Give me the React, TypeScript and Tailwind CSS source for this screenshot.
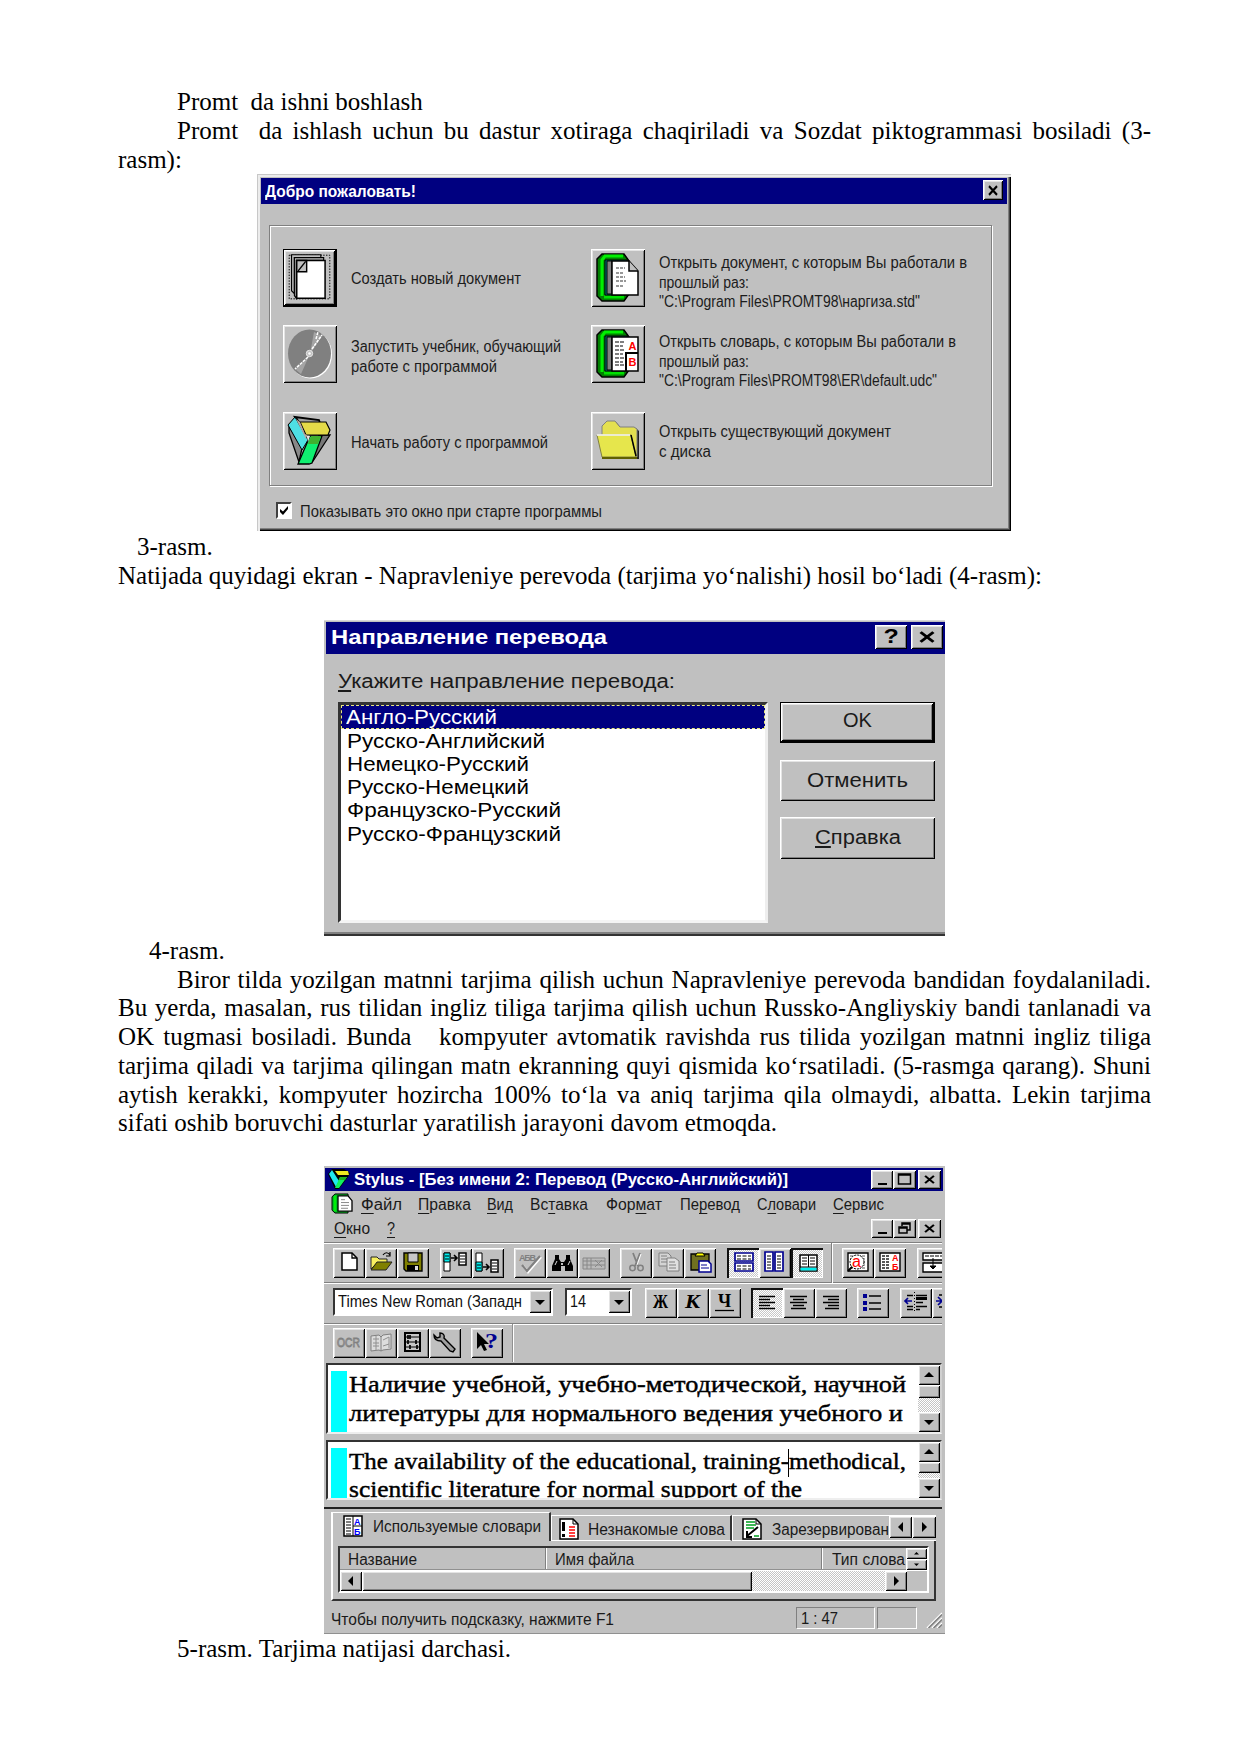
import React, { useLayoutEffect, useRef, useState } from "react";

type BoxProps = { className?: string; children?: React.ReactNode };

const RAISED =
  "bg-[#c0c0c0] shadow-[inset_1px_1px_0_#fff,inset_-1px_-1px_0_#000,inset_2px_2px_0_#e4e4e4,inset_-2px_-2px_0_#808080]";
const PRESSED =
  "bg-[repeating-conic-gradient(#fff_0_25%,#c8c8c8_0_50%)] bg-[length:2px_2px] shadow-[inset_2px_2px_0_#111,inset_-1px_-1px_0_#fff]";
const TRACK = "bg-[repeating-conic-gradient(#fff_0_25%,#c4c4c4_0_50%)] bg-[length:2px_2px]";

/** One line of text stretched or condensed to the width of its box. */
function Fit({ className = "", children }: BoxProps) {
  const box = useRef<HTMLSpanElement>(null);
  const line = useRef<HTMLSpanElement>(null);
  const [scale, setScale] = useState(1);
  useLayoutEffect(() => {
    if (box.current && line.current && line.current.offsetWidth) {
      setScale(box.current.clientWidth / line.current.getBoundingClientRect().width);
    }
  }, []);
  return (
    <span ref={box} className={`block shrink-0 whitespace-pre ${className}`}>
      <span ref={line} className="inline-block origin-left" style={{ transform: `scaleX(${scale})` }}>
        {children}
      </span>
    </span>
  );
}

function Ico({ className = "", children, box = "0 0 32 30" }: BoxProps & { box?: string }) {
  return (
    <svg viewBox={box} className={`block ${className}`} fill="none" preserveAspectRatio="none">
      {children}
    </svg>
  );
}

function Line({ className = "", children }: BoxProps) {
  return <p className={`h-[28.75px] whitespace-pre leading-[28.75px] ${className}`}>{children}</p>;
}

function Just({ className = "", children }: BoxProps) {
  return (
    <p className={`h-[28.75px] w-[1033px] leading-[28.75px] whitespace-nowrap [text-align-last:justify] ${className}`}>
      {children}
    </p>
  );
}

/* ---------- Welcome dialog ---------- */

const BIG = "0 0 54 58";

function IconNewBig() {
  return (
    <Ico box={BIG} className="h-full w-full">
      <rect x="5.5" y="5.5" width="43" height="46" stroke="#000" strokeDasharray="1.5 1.5" />
      <path d="M8 5h31v3H11v38l-3-3z" fill="#c0c0c0" stroke="#000" strokeWidth="1.200" />
      <path d="M11 8h31v3H13v40l-2-3z" fill="#c0c0c0" stroke="#000" strokeWidth="1.200" />
      <path d="M13.500 11h30v40h-30z" fill="#fff" stroke="#000" strokeWidth="1.600" />
      <path d="M13.500 11h10.500v12H13.500z" fill="#c0c0c0" stroke="#000" strokeWidth="1.500" />
      <path d="M15 22l8-10" stroke="#000" strokeWidth="1.500" />
    </Ico>
  );
}

function IconDisc() {
  return (
    <Ico box={BIG} className="h-full w-full">
      <ellipse cx="27.500" cy="29.500" rx="21.500" ry="24" fill="#fff" />
      <ellipse cx="26.500" cy="28.500" rx="21.500" ry="24" fill="#808080" />
      <path d="M27 29L31 7l8 4zM26 31L12 44l6 5z" fill="#a4a4a4" />
      <path d="M29 24L39 10M33 14l2-7M25 32L12 44" stroke="#fff" strokeWidth="1.500" strokeDasharray="3 1" />
      <circle cx="26.500" cy="28.500" r="3.200" fill="#c0c0c0" stroke="#e8e8e8" />
      <circle cx="26.500" cy="28.500" r="1.300" fill="#fff" />
    </Ico>
  );
}

function IconPrismBig() {
  return (
    <Ico box={BIG} className="h-full w-full">
      <path d="M6 14v7l10 29 3-14z" fill="#888" stroke="#000" strokeWidth="1.300" />
      <path d="M47 23L30 49l-2 1 8-27z" fill="#777" stroke="#000" strokeWidth="1.300" />
      <path d="M12 5l24 3 1 3H17z" fill="#a0a0a0" stroke="#000" strokeWidth="1.800" />
      <path d="M5 13l7-8 13 23-6 10z" fill="#4edfe4" stroke="#000" strokeWidth="1" />
      <path d="M17 10h26l4 8-2 5H23z" fill="#e4da48" stroke="#000" strokeWidth="1.200" />
      <path d="M17 10l5 12 2 1-1 4L13 7z" fill="#b8a8a0" />
      <path d="M27 24h12L29 51l-3 1H15z" fill="#10ee70" stroke="#000" strokeWidth="1.300" />
      <path d="M28 24h10l-3 8H25z" fill="#40b030" />
      <path d="M24 24h3l-2 6z" fill="#e8e8e8" />
    </Ico>
  );
}

function PrismSmall() {
  return (
    <Ico box="0 0 22 20" className="mt-px ml-[3px] h-[20px] w-[22px]">
      <path d="M0 5l4-5h12l6 4-2 4-9 12H7z" fill="#000" />
      <path d="M1 5l3-4 7 11-3 6z" fill="#20e8f0" />
      <path d="M7 2h13l1 4H10z" fill="#f0e820" />
      <path d="M12 8h7l-8 11H7z" fill="#10f060" />
      <path d="M12 8h7l-2 3h-6z" fill="#20b020" />
    </Ico>
  );
}

function Binder({ children }: BoxProps) {
  return (
    <Ico box={BIG} className="h-full w-full">
      <path d="M6 10l5-5h22l5 7v33l-5 7H11l-5-5z" fill="#008000" stroke="#000" strokeWidth="1.500" />
      <path d="M11 47V11l3-4h18" stroke="#00f000" strokeWidth="3" />
      <path d="M13 48h20" stroke="#00e000" strokeWidth="3" />
      <path d="M14 11h22v35H14z" fill="#008080" stroke="#000" />
      <path d="M16 12h5v33h-5z" fill="#808080" stroke="#000" />
      {children}
    </Ico>
  );
}

function IconDocBig() {
  return (
    <Binder>
      <path d="M21 12h17l9 10v24H21z" fill="#fff" stroke="#000" strokeWidth="1.500" />
      <path d="M38 12v10h9" fill="#c0c0c0" stroke="#000" strokeWidth="1.500" />
      <path d="M25 19h9M25 24h8M25 28h9M25 32h10M25 37h8" stroke="#777" strokeWidth="1.300" strokeDasharray="3 1" />
    </Binder>
  );
}

function IconDictBig() {
  return (
    <Binder>
      <path d="M21 12h26v34H21z" fill="#fff" stroke="#000" strokeWidth="1.500" />
      <path d="M24 17h9M24 21h8M24 25h9M24 29h8M24 33h9M24 37h8M24 40h9" stroke="#555" strokeWidth="1.500" strokeDasharray="4 1" />
      <path d="M35 46V28h12" stroke="#000" strokeWidth="2" />
      <text x="37.500" y="25" fontSize="11" fontWeight="bold" fontFamily="Liberation Sans" fill="#f00">A</text>
      <text x="37.500" y="41" fontSize="11" fontWeight="bold" fontFamily="Liberation Sans" fill="#f00">B</text>
    </Binder>
  );
}

function IconFolderBig() {
  return (
    <Ico box={BIG} className="h-full w-full">
      <path d="M12 20l1-7 4-3h8l5 6h15l3 3v28H14z" fill="#222" />
      <path d="M11 22v-8l5-5h8l5 6h14l3 2v28H13z" fill="#e4e050" stroke="#808080" />
      <path d="M6 23h34l5 22H11z" fill="#e6e64c" stroke="#808040" />
      <path d="M6 23h33" stroke="#fff" strokeWidth="1.500" />
      <path d="M40 23l5 21" stroke="#000" strokeWidth="1.500" />
      <path d="M11 46h35" stroke="#606000" strokeWidth="2" />
    </Ico>
  );
}

function BigButton({ focus, children }: { focus?: boolean; children: React.ReactNode }) {
  return (
    <div className={`h-[58px] w-[54px] shrink-0 ${RAISED} ${focus ? "border-[1.5px] border-black border-r-2 border-b-2" : ""}`}>{children}</div>
  );
}

function CloseX({ className = "" }: { className?: string }) {
  return (
    <Ico box="0 0 10 10" className={className}>
      <path d="M1 1l8 8M9 1l-8 8" stroke="#000" strokeWidth="2" />
    </Ico>
  );
}

function Welcome() {
  return (
    <section className="ml-[257px] h-[357px] w-[754px] bg-[#c0c0c0] px-1 pt-1 font-['Liberation_Sans',sans-serif] text-[16px] leading-[19.3px] text-[#1c1c1c] shadow-[inset_1px_1px_0_#c8c8c8,inset_3px_3px_0_#ececec,inset_-1px_-1px_0_#000,inset_-2px_-2px_0_#444,inset_-3px_-3px_0_#808080]">
      <header className="flex h-[26px] items-start bg-[#000080] pl-1 text-white">
        <Fit className="mt-[4px] w-[151px] font-bold">Добро пожаловать!</Fit>
        <div className={`mt-[2px] mr-1 ml-auto flex h-5 w-5 items-center justify-center ${RAISED}`}>
          <CloseX className="h-[11px] w-[10px]" />
        </div>
      </header>
      <div className="mt-[21px] ml-2 h-[261px] w-[723px] border border-[#808080] pt-[23px] pl-[13px] shadow-[inset_1px_1px_0_#fff,1px_1px_0_#fff]">
        <div className="flex">
          <BigButton focus><IconNewBig /></BigButton>
          <div className="ml-[14px] w-[240px] pt-5"><Fit className="w-[170px]">Создать новый документ</Fit></div>
          <BigButton><IconDocBig /></BigButton>
          <div className="ml-[14px] h-[58px] pt-1">
            <Fit className="w-[308px]">Открыть документ, с которым Вы работали в</Fit>
            <Fit className="w-[90px]">прошлый раз:</Fit>
            <Fit className="w-[261px]">"C:\Program Files\PROMT98\наргиза.std"</Fit>
          </div>
        </div>
        <div className="mt-[18px] flex">
          <BigButton><IconDisc /></BigButton>
          <div className="ml-[14px] w-[240px] pt-3">
            <Fit className="w-[210px]">Запустить учебник, обучающий</Fit>
            <Fit className="w-[146px]">работе с программой</Fit>
          </div>
          <BigButton><IconDictBig /></BigButton>
          <div className="ml-[14px] h-[58px] pt-[7px]">
            <Fit className="w-[297px]">Открыть словарь, с которым Вы работали в</Fit>
            <Fit className="w-[90px]">прошлый раз:</Fit>
            <Fit className="w-[278px]">"C:\Program Files\PROMT98\ER\default.udc"</Fit>
          </div>
        </div>
        <div className="mt-[29px] flex">
          <BigButton><IconPrismBig /></BigButton>
          <div className="ml-[14px] w-[240px] pt-[21px]"><Fit className="w-[197px]">Начать работу с программой</Fit></div>
          <BigButton><IconFolderBig /></BigButton>
          <div className="ml-[14px] pt-[10px]">
            <Fit className="w-[232px]">Открыть существующий документ</Fit>
            <Fit className="w-[52px]">с диска</Fit>
          </div>
        </div>
      </div>
      <div className="mt-[16px] ml-[15px] flex">
        <div className="h-[17px] w-4 border-2 border-t-[#404040] border-r-white border-b-white border-l-[#404040] bg-white">
          <Ico box="0 0 12 13" className="h-[13px] w-3"><path d="M2 5v3l3 3 5-6V2L5 7.500z" fill="#000" /></Ico>
        </div>
        <Fit className="ml-[8px] w-[302px]">Показывать это окно при старте программы</Fit>
      </div>
    </section>
  );
}

/* ---------- Translation direction dialog ---------- */

function PushButton({ className = "", children }: BoxProps) {
  return <div className={`flex w-[155px] justify-center ${RAISED} ${className}`}>{children}</div>;
}

function Direction() {
  return (
    <section className="ml-[324px] h-[316px] w-[621px] border-t border-b-2 border-t-[#d8d8d8] border-b-[#333] bg-[#c0c0c0] pt-px font-['Liberation_Sans',sans-serif] text-[20px] leading-[23px] text-[#1a1a1a] shadow-[inset_0_-2px_0_#808080]">
      <header className="ml-[2px] flex h-[32px] bg-[#000080] pt-[3px] pl-[5px] text-white">
        <Fit className="mt-px w-[276px] font-bold">Направление перевода</Fit>
        <div className={`ml-auto flex h-6 w-8 items-center justify-center ${RAISED}`}>
          <span className="scale-x-125 text-[20px] font-bold text-black">?</span>
        </div>
        <div className={`mr-[2px] ml-1 flex h-6 w-8 items-center justify-center ${RAISED}`}>
          <CloseX className="h-3 w-4" />
        </div>
      </header>
      <Fit className="mt-[16px] ml-[14px] w-[337px]"><u className="underline-offset-2">У</u>кажите направление перевода:</Fit>
      <div className="mt-[9px] ml-[14px] flex">
        <div className="h-[221px] w-[430px] border-t-[3px] border-r-[3px] border-b-[3px] border-l-[3px] border-t-[#333] border-r-[#eee] border-b-[#f4f4f4] border-l-[#333] bg-white text-black">
          <div className="h-[24px] border border-dashed border-[#e8e880] bg-[#000080] pl-1 text-white">
            <Fit className="w-[151px]">Англо-Русский</Fit>
          </div>
          <div className="pt-px pl-[6px] leading-[23.200px]">
            <Fit className="w-[198px]">Русско-Английский</Fit>
            <Fit className="w-[182px]">Немецко-Русский</Fit>
            <Fit className="w-[182px]">Русско-Немецкий</Fit>
            <Fit className="w-[214px]">Французско-Русский</Fit>
            <Fit className="w-[214px]">Русско-Французский</Fit>
          </div>
        </div>
        <div className="ml-3">
          <PushButton className="h-[41px] border-t border-r-2 border-b-2 border-l border-black pt-[6px]"><Fit className="w-[29px]">OK</Fit></PushButton>
          <PushButton className="mt-[17px] h-[41px] pt-[9px]"><Fit className="w-[101px]">Отменить</Fit></PushButton>
          <PushButton className="mt-4 h-[42px] pt-[9px]"><Fit className="w-[86px]"><u className="underline-offset-2">С</u>правка</Fit></PushButton>
        </div>
      </div>
    </section>
  );
}

/* ---------- Stylus window ---------- */

function Tool({ on, className = "", children }: BoxProps & { on?: boolean }) {
  return (
    <div className={`h-[30px] w-[32px] shrink-0 overflow-hidden ${on ? PRESSED : RAISED} ${className}`}>
      <Ico className="h-[30px] w-[32px]">{children}</Ico>
    </div>
  );
}

function WinButtons({ restore }: { restore?: boolean }) {
  return (
    <>
      <div className={`flex h-[19px] w-[22px] items-end justify-center pb-1 ${RAISED}`}><span className="h-[2px] w-[9px] bg-black" /></div>
      <div className={`h-[19px] w-[23px] ${RAISED}`}>
        <Ico box="0 0 23 19" className="h-full w-full">
          {restore ? (
            <>
              <path d="M9 7V4h8v7h-3M9 5h8" stroke="#000" strokeWidth="1.500" />
              <path d="M6 8h8v6H6zM6 9h8" stroke="#000" strokeWidth="1.500" />
            </>
          ) : (
            <path d="M5.500 4h12v10h-12zM5 5h13" stroke="#000" strokeWidth="1.500" />
          )}
        </Ico>
      </div>
      <div className={`mr-[2px] ml-[2px] flex h-[19px] w-[23px] items-center justify-center ${RAISED}`}><CloseX className="h-[9px] w-[11px]" /></div>
    </>
  );
}

function Arrow({ dir, small, className = "" }: { dir: "up" | "down" | "left" | "right"; small?: boolean; className?: string }) {
  const d = { up: "M0 7h10L5 2z", down: "M0 3h10L5 8z", left: "M7 0v10L2 5z", right: "M3 0v10l5-5z" }[dir];
  return (
    <div className={`flex items-center justify-center ${RAISED} ${className}`}>
      <Ico box="0 0 10 10" className={small ? "h-[5px] w-[5px]" : "h-[10px] w-[10px]"}><path d={d} fill="#000" /></Ico>
    </div>
  );
}

function Menu({ className, a = "", u, b = "" }: { className: string; a?: string; u: string; b?: string }) {
  return <Fit className={className}>{a}<u className="underline-offset-[3px]">{u}</u>{b}</Fit>;
}

const BAR = "flex border-t border-[#808080] shadow-[inset_0_1px_0_#fff] pl-[9px]";

function Toolbars() {
  return (
    <div className="w-[618px] overflow-hidden">
      <div className={`${BAR} h-[40px] pt-[5px]`}>
        <Tool><path d="M9 5h10l5 5v12H9z" fill="#fff" stroke="#000" strokeWidth="1.500" /><path d="M19 5v5h5" stroke="#000" strokeWidth="1.300" /></Tool>
        <Tool>
          <path d="M6 21V9h6l2 2h8v4H12z" fill="#f8f060" stroke="#222" />
          <path d="M6 22l6-8h15l-6 8z" fill="#808000" stroke="#222" />
          <path d="M18 7c2-3 5-3 7 0m0-3v4h-4" stroke="#000" strokeWidth="1.200" />
        </Tool>
        <Tool>
          <path d="M7 5h18v18H9l-2-2z" fill="#808000" stroke="#000" strokeWidth="1.400" />
          <path d="M11 5h10v9H11z" fill="#c8c8c8" stroke="#000" /><path d="M10 17h12v6H10z" fill="#000" /><path d="M18 18h3v4h-3z" fill="#ddd" />
        </Tool>
        <Tool className="ml-[11px]">
          <path d="M4 5h6v18H4z" fill="#fff" stroke="#000" /><path d="M4 5h6v9H4z" fill="#0ee" stroke="#000" /><path d="M5 8h4M5 11h4" stroke="#000" />
          <path d="M11 10h6M14 7l3 3-3 3" stroke="#000" strokeWidth="1.600" /><path d="M19 5h7v12h-7z" fill="#fff" stroke="#000" strokeWidth="1.500" /><path d="M20 8h5M20 11h5M20 14h5" stroke="#000" />
        </Tool>
        <Tool>
          <path d="M4 5h6v18H4z" fill="#fff" stroke="#000" /><path d="M4 14h6v9H4z" fill="#0ee" stroke="#000" /><path d="M5 17h4M5 20h4" stroke="#000" />
          <path d="M11 19h6M14 16l3 3-3 3" stroke="#000" strokeWidth="1.600" /><path d="M19 12h7v12h-7z" fill="#fff" stroke="#000" strokeWidth="1.500" /><path d="M20 15h5M20 18h5M20 21h5" stroke="#000" />
        </Tool>
        <Tool className="ml-[10px]">
          <text x="5" y="13" fontSize="9" fontWeight="bold" fontFamily="Liberation Sans" fill="#808080" textLength="17">АБВ</text>
          <path d="M9 18l5 6L27 9" stroke="#fff" strokeWidth="2.500" /><path d="M8 17l5 6L26 8" stroke="#808080" strokeWidth="2.200" />
        </Tool>
        <Tool>
          <path d="M9 7h4v4l2 3h3l2-3V7h4v4l3 7v5h-8v-5h-4v5H6v-5l3-7z" fill="#000" /><path d="M9 17l2-4M22 17l2-4" stroke="#ddd" /><path d="M15 15h2v2h-2z" fill="#c0c0c0" />
        </Tool>
        <Tool><path d="M5 10h22v11H5z" stroke="#888" fill="#bbb" /><path d="M5 13h22M5 17h22M9 10v11M13 10v11M17 12l7 7M24 12l-7 7" stroke="#888" /></Tool>
        <Tool className="ml-[10px]">
          <path d="M13 5l5 13M20 5l-5 13" stroke="#808080" strokeWidth="1.800" /><circle cx="12.500" cy="20" r="2.700" stroke="#808080" strokeWidth="1.500" /><circle cx="20.500" cy="20" r="2.700" stroke="#808080" strokeWidth="1.500" /><path d="M21 6l-4 11" stroke="#fff" />
        </Tool>
        <Tool>
          <path d="M7 5h9l3 3v10H7z" fill="#d4d4d4" stroke="#808080" /><path d="M9 8h6M9 11h7M9 14h7" stroke="#808080" />
          <path d="M15 10h8l4 3v10H15z" fill="#e0e0e0" stroke="#808080" /><path d="M17 14h6M17 17h7M17 20h7" stroke="#808080" />
        </Tool>
        <Tool>
          <path d="M7 6h18v16H7z" fill="#707020" stroke="#000" strokeWidth="1.300" /><path d="M11 8l2-3h6l2 3z" fill="#ff0" stroke="#000" />
          <path d="M15 13h9l3 3v8H15z" fill="#fff" stroke="#000090" strokeWidth="1.500" /><path d="M17 17h6M17 20h8" stroke="#000090" />
        </Tool>
        <Tool on className="ml-[11px]">
          <path d="M8 5h18v8H8zM8 15h18v8H8z" fill="#fff" stroke="#000090" strokeWidth="1.700" /><path d="M10 8h14M10 11h14M10 18h14M10 21h14" stroke="#000" strokeDasharray="4 1.500" />
        </Tool>
        <Tool>
          <path d="M6 4h8v19H6zM16 4h8v19h-8z" fill="#fff" stroke="#000090" strokeWidth="1.700" /><path d="M8 8h4M8 11h4M8 14h4M8 17h4M8 20h4M18 8h4M18 11h4M18 14h4M18 17h4M18 20h4" stroke="#000" />
        </Tool>
        <Tool on>
          <path d="M9 7h17v16H9z" fill="#fff" stroke="#000" strokeWidth="1.500" /><path d="M9.500 19.500h16v3h-16z" fill="#0ee" /><path d="M17.500 7v12M9 19h17" stroke="#000" /><path d="M11 10h5M11 13h5M11 16h5M19 10h5M19 13h5M19 16h5" stroke="#000" />
        </Tool>
        <span className="-mt-[5px] ml-[8px] h-[40px] w-[2px] shrink-0 border-r border-l border-[#808080] border-r-white" />
        <Tool className="ml-[9px]">
          <path d="M6 5h20v18H6z" fill="#fff" stroke="#000" strokeWidth="1.400" /><path d="M8 8h16M8 11h16M8 14h16M8 17h16M8 20h16" stroke="#555" strokeDasharray="3 1" />
          <circle cx="15" cy="14" r="7" fill="#fff" stroke="#000" strokeDasharray="2 1" /><text x="10" y="19" fontSize="16" fontFamily="Liberation Sans" fill="#f00">a</text>
          <path d="M6 23l4-4" stroke="#000" strokeWidth="2" />
        </Tool>
        <Tool>
          <path d="M6 5h20v18H6z" fill="#fff" stroke="#000" strokeWidth="1.400" /><path d="M8 8h8M8 11h8M8 14h8M8 17h8M8 20h8" stroke="#222" strokeWidth="1.300" strokeDasharray="3 1" />
          <text x="18" y="13" fontSize="9" fontWeight="bold" fontFamily="Liberation Sans" fill="#f00">А</text><text x="18" y="22" fontSize="9" fontWeight="bold" fontFamily="Liberation Sans" fill="#f00">Б</text>
        </Tool>
        <Tool className="ml-[11px]">
          <path d="M6 5h24v7H6zM6 15h24v9H6z" fill="#fff" stroke="#000" strokeWidth="1.400" /><path d="M8 8h20" stroke="#000" strokeDasharray="4 1" /><path d="M16 10v10M13 18l3 3 3-3z" stroke="#000" fill="#000" />
        </Tool>
      </div>
      <div className={`${BAR} h-[41px] pt-[5px] text-[#111]`}>
        <div className="flex h-[28px] w-[220px] shrink-0 border-2 border-t-[#333] border-r-white border-b-white border-l-[#333] bg-white">
          <Fit className="mt-[2px] ml-[3px] w-[184px]">Times New Roman (Западн</Fit>
          <Arrow dir="down" className="ml-auto h-[23px] w-[22px]" />
        </div>
        <div className="ml-3 flex h-[28px] w-[67px] shrink-0 border-2 border-t-[#333] border-r-white border-b-white border-l-[#333] bg-white">
          <Fit className="mt-[2px] ml-[3px] w-[16px]">14</Fit>
          <Arrow dir="down" className="ml-auto h-[23px] w-[22px]" />
        </div>
        <Tool className="ml-[13px]"><text x="8" y="20" fontSize="19" fontWeight="bold" fontFamily="Liberation Serif" fill="#000" textLength="15" lengthAdjust="spacingAndGlyphs">Ж</text></Tool>
        <Tool><text x="8" y="20" fontSize="19" fontWeight="bold" fontStyle="italic" fontFamily="Liberation Serif" fill="#000" textLength="15" lengthAdjust="spacingAndGlyphs">К</text></Tool>
        <Tool><text x="9" y="19" fontSize="18" fontWeight="bold" fontFamily="Liberation Serif" fill="#000">Ч</text><path d="M6 22.500h19" stroke="#000" strokeWidth="1.300" /></Tool>
        <Tool on className="ml-[10px]"><path d="M8 8.500h16M8 11.500h11M8 14.500h16M8 17.500h11M8 20.500h16" stroke="#000" strokeWidth="1.300" /></Tool>
        <Tool><path d="M7 8.500h17M10 11.500h11M7 14.500h17M10 17.500h11M8 20.500h15" stroke="#000" strokeWidth="1.300" /></Tool>
        <Tool><path d="M8 8.500h16M13 11.500h11M8 14.500h16M13 17.500h11M10 20.500h14" stroke="#000" strokeWidth="1.300" /></Tool>
        <Tool className="ml-[10px]"><path d="M6 6h4v4H6zM6 13h4v4H6zM6 19h4v4H6z" fill="#000090" /><path d="M12 8h12M12 15h12M12 21h12" stroke="#000" strokeWidth="1.300" /></Tool>
        <Tool className="ml-[11px]"><path d="M7 7.500h6M16 7.500h11M16 10.500h11M16 14.500h7M7 18.500h6M16 18.500h11M7 21.500h6M16 21.500h4" stroke="#000" strokeWidth="1.500" /><path d="M16 10.500h11" stroke="#000" strokeWidth="3" /><path d="M14.500 4v21" stroke="#000" strokeDasharray="1 2" /><path d="M5 13h7M8 10l-3 3 3 3" stroke="#000090" strokeWidth="1.700" /></Tool>
        <Tool><path d="M4 13h6M6 9l4 4-4 4" stroke="#000090" strokeWidth="1.700" /><path d="M7 7h6M7 19h6" stroke="#000" strokeWidth="1.500" /></Tool>
      </div>
      <div className={`${BAR} h-[40px] pt-[4px]`}>
        <Tool><text x="4" y="19" fontSize="12" fontFamily="Liberation Sans" fill="#b0b0b0" stroke="#808080" strokeWidth=".8" textLength="23" lengthAdjust="spacingAndGlyphs">OCR</text></Tool>
        <Tool><path d="M6 8l8-1 2 2 2-2 8-1v15l-8 1-2 1-2-1-8 1zM16 8v15" stroke="#808080" fill="#ddd" /><path d="M11 8v14M8 11h6M8 15h6M8 18h6M18 12l6-3v11M18 18l6-2" stroke="#909090" /></Tool>
        <Tool><path d="M8 5h15v18H8z" fill="#c8c8c8" stroke="#000" strokeWidth="2" /><path d="M8 9h15M8 14h15M8 19h15" stroke="#000" /><path d="M11 7v4M13 7v4M11 12v4M19 12v4M13 17v4M20 17v4" stroke="#000" strokeWidth="1.700" /></Tool>
        <Tool><path d="M5 7l3 3 3-1V5c3 0 5 2 4 5l11 11-2 3-3-1-9-10c-4 0-7-2-7-6z" fill="#a0a0a0" stroke="#000" strokeWidth="1.400" /></Tool>
        <Tool className="ml-[10px]"><path d="M6 4v17l4-4 3 6 3-1-3-6h5z" fill="#000" /><text x="14" y="20" fontSize="21" fontWeight="bold" fontFamily="Liberation Serif" fill="#000090" textLength="13" lengthAdjust="spacingAndGlyphs">?</text></Tool>
        <span className="-mt-[4px] ml-[9px] h-[38px] w-[2px] border-r border-l border-[#909090] border-r-white" />
      </div>
    </div>
  );
}

function Editor({ className = "", thumb, children }: BoxProps & { thumb: string }) {
  return (
    <div className={`flex w-[616px] overflow-hidden border-2 border-t-[#333] border-r-[#d0d0d0] border-b-[#eee] border-l-[#333] bg-white ${className}`}>
      <div className="mt-[6px] ml-[3px] w-4 shrink-0 bg-[#00ffff]" />
      <div className="ml-[2px] grow text-black">{children}</div>
      <div className={`flex w-[22px] shrink-0 flex-col ${TRACK}`}>
        <Arrow dir="up" className="h-[20px]" />
        <div className={`${RAISED} ${thumb}`} />
        <Arrow dir="down" className="mt-auto h-[20px]" />
      </div>
    </div>
  );
}

function Bottom() {
  return (
    <div className="ml-[7px] w-[605px] text-[#1a1a1a]">
      <div className="flex h-[32px] items-end">
        <div className="flex h-[29px] w-[220px] border-t border-r-2 border-l-2 border-t-white border-r-[#333] border-l-white">
          <Ico box="0 0 20 22" className="mt-[2px] ml-[10px] h-[22px] w-[20px]">
            <path d="M1 1h18v20H1z" fill="#fff" stroke="#000" strokeWidth="1.500" /><path d="M3 4h5M3 7h5M3 10h5M3 13h5M3 16h5M3 19h5" stroke="#000" /><path d="M10 1v20M10 11h9" stroke="#000" />
            <text x="11" y="9.500" fontSize="9" fontWeight="bold" fontFamily="Liberation Sans" fill="#00f">А</text><text x="11" y="19.500" fontSize="9" fontWeight="bold" fontFamily="Liberation Sans" fill="#00f">Б</text>
          </Ico>
          <Fit className="mt-[4px] ml-[10px] w-[168px]">Используемые словари</Fit>
        </div>
        <div className="flex h-[26px] w-[181px] border-t border-r-2 border-b border-l border-t-white border-r-[#333] border-b-white border-l-white">
          <Ico box="0 0 20 22" className="mt-[2px] ml-[7px] h-[22px] w-[20px]">
            <path d="M1 1h13l5 5v15H1z" fill="#fff" stroke="#000" strokeWidth="1.500" /><path d="M14 1v5h5" stroke="#000" /><path d="M3 4h3v9H3zM3 16h3v3H3z" fill="#000" /><path d="M10 9h6M10 12h6M10 15h6M10 18h6" stroke="#f00" strokeWidth="1.400" />
          </Ico>
          <Fit className="mt-[4px] ml-[9px] w-[137px]">Незнакомые слова</Fit>
        </div>
        <div className="flex h-[26px] w-[204px] border-t border-b border-l border-white">
          <Ico box="0 0 20 22" className="mt-[2px] ml-[9px] h-[22px] w-[20px]">
            <path d="M1 1h13l5 5v15H1z" fill="#fff" stroke="#000" strokeWidth="1.500" /><path d="M14 1v5h5" stroke="#000" /><path d="M4 4h9M4 7h10M4 10h8M12 18h5" stroke="#00a020" strokeWidth="1.400" /><path d="M5 13v6h5M5 18l11-9" stroke="#000" strokeWidth="2" />
          </Ico>
          <Fit className="mt-[4px] ml-[10px] w-[117px]">Зарезервирован</Fit>
          <Arrow dir="left" className="h-[22px] w-[23px]" />
          <Arrow dir="right" className="h-[22px] w-[24px]" />
        </div>
      </div>
      <div className="h-[60px] border-r-2 border-b-2 border-l-2 border-r-[#333] border-b-[#333] border-l-white pt-[5px] pl-[5px]">
        <div className="h-[47px] w-[591px] border-2 border-t-[#333] border-r-white border-b-white border-l-[#333]">
          <div className="flex h-[22px] border-b border-[#909090]">
            <Fit className="mt-[2px] ml-[8px] w-[69px]">Название</Fit>
            <span className="ml-[128px] w-[2px] border-r border-l border-[#808080] border-r-white" />
            <Fit className="mt-[2px] ml-[8px] w-[79px]">Имя файла</Fit>
            <span className="ml-[187px] w-[2px] border-r border-l border-[#808080] border-r-white" />
            <Fit className="mt-[2px] ml-[9px] w-[73px]">Тип слова</Fit>
            <div className="ml-auto w-[21px]">
              <Arrow dir="up" small className="h-[11px]" />
              <Arrow dir="down" small className="h-[11px]" />
            </div>
          </div>
          <div className="flex h-[21px] border-t border-white">
            <div className={`flex w-[567px] ${TRACK}`}>
              <Arrow dir="left" className="w-[22px]" />
              <div className={`w-[390px] ${RAISED}`} />
              <Arrow dir="right" className="ml-auto w-[22px]" />
            </div>
          </div>
        </div>
      </div>
    </div>
  );
}

function Stylus() {
  return (
    <section className="ml-[324px] h-[468px] w-[621px] border-b border-[#909090] bg-[#c0c0c0] pt-[2px] font-['Liberation_Sans',sans-serif] text-[16px] leading-[20px] text-[#1a1a1a]">
      <header className="ml-px flex h-[23px] w-[618px] bg-[#000080] text-white">
        <PrismSmall />
        <Fit className="mt-[2px] mr-auto ml-[4px] w-[434px] font-bold">Stylus - [Без имени 2: Перевод (Русско-Английский)]</Fit>
        <div className="flex pt-[2px]"><WinButtons /></div>
      </header>
      <nav className="flex h-[26px] pt-[4px] pl-[7px]">
        <Ico box="0 0 22 22" className="-mt-[2px] h-[21px] w-[22px]">
          <path d="M1 4l3-3h13v20H4l-3-3z" fill="#00c020" stroke="#000" /><path d="M4 3v16" stroke="#0f0" strokeWidth="1.500" />
          <path d="M7 3h10l4 5v11H7z" fill="#fff" stroke="#000" strokeWidth="1.300" /><path d="M10 7h4M10 10h8M10 13h8M10 16h7" stroke="#888" />
        </Ico>
        <Menu className="ml-[8px] w-[41px]" u="Ф" b="айл" />
        <Menu className="ml-[16px] w-[53px]" u="П" b="равка" />
        <Menu className="ml-[16px] w-[26px]" u="В" b="ид" />
        <Menu className="ml-[17px] w-[58px]" a="Вс" u="т" b="авка" />
        <Menu className="ml-[18px] w-[56px]" a="Фор" u="м" b="ат" />
        <Menu className="ml-[18px] w-[60px]" a="Пе" u="р" b="евод" />
        <Menu className="ml-[17px] w-[59px]" a="С" u="л" b="овари" />
        <Menu className="ml-[17px] w-[51px]" u="С" b="ервис" />
      </nav>
      <nav className="flex h-[25px] w-[619px] pt-[2px] pl-[10px]">
        <Menu className="w-[36px]" u="О" b="кно" />
        <Menu className="mr-auto ml-[17px] w-[8px]" u="?" />
        <div className="flex"><WinButtons restore /></div>
      </nav>
      <Toolbars />
      <div className="ml-[2px] font-['Liberation_Serif',serif] text-[24px] leading-[28.500px] [-webkit-text-stroke:0.45px_#000]">
        <Editor className="h-[71px]" thumb="h-[13px]">
          <Fit className="mt-[5px] w-[557px]">Наличие учебной, учебно-методической, научной</Fit>
          <Fit className="w-[554px]">литературы для нормального ведения учебного и</Fit>
        </Editor>
        <Editor className="mt-[6px] h-[60px]" thumb="h-[11px]">
          <div className="relative">
            <Fit className="mt-[5px] w-[557px]">The availability of the educational, training-methodical,</Fit>
            <Fit className="-mt-px w-[453px]">scientific literature for normal support of the</Fit>
            <span className="absolute top-[2px] left-[439px] h-[28px] w-px bg-black" />
          </div>
        </Editor>
      </div>
      <div className="mt-[7px] h-[2px] w-[618px] bg-[#222]" />
      <Bottom />
      <footer className="flex pt-[6px] pl-[7px]">
        <Fit className="mt-[3px] w-[283px]">Чтобы получить подсказку, нажмите F1</Fit>
        <div className="ml-[182px] h-[22px] w-[79px] border border-t-[#808080] border-r-white border-b-white border-l-[#808080] pt-px pl-1"><Fit className="w-[37px]">1 : 47</Fit></div>
        <div className="ml-[2px] h-[22px] w-[40px] border border-t-[#808080] border-r-white border-b-white border-l-[#808080]" />
        <Ico box="0 0 16 16" className="mt-[5px] ml-[9px] h-[16px] w-[16px]">
          <path d="M1 16L16 1M6 16L16 6M11 16l5-5" stroke="#fff" strokeWidth="1.500" /><path d="M2.500 16L16 2.500M7.500 16L16 7.500M12.500 16l3.500-3.500" stroke="#808080" strokeWidth="1.500" />
        </Ico>
      </footer>
    </section>
  );
}

export default function App() {
  return (
    <main className="h-[1754px] w-[1240px] overflow-hidden bg-white pt-[88px] font-['Liberation_Serif',serif] text-[25px] text-black">
      <Line className="ml-[177px]">{"Promt  da ishni boshlash"}</Line>
      <Just className="ml-[118px] pl-[59px]">{"Promt \u00a0da ishlash uchun bu dastur xotiraga chaqiriladi va Sozdat piktogrammasi bosiladi (3-"}</Just>
      <Line className="ml-[118px]">rasm):</Line>
      <Welcome />
      <Line className="mt-[2px] ml-[137px]">3-rasm.</Line>
      <Line className="ml-[118px]"><Fit className="w-[924px]">Natijada quyidagi ekran - Napravleniye perevoda (tarjima yo‘nalishi) hosil bo‘ladi (4-rasm):</Fit></Line>
      <div className="mt-[29px]"><Direction /></div>
      <Line className="mt-px ml-[149px]">4-rasm.</Line>
      <Just className="ml-[118px] pl-[59px]">Biror tilda yozilgan matnni tarjima qilish uchun Napravleniye perevoda bandidan foydalaniladi.</Just>
      <Just className="ml-[118px]">Bu yerda, masalan, rus tilidan ingliz tiliga tarjima qilish uchun Russko-Angliyskiy bandi tanlanadi va</Just>
      <Just className="ml-[118px]">{"OK tugmasi bosiladi. Bunda \u00a0 kompyuter avtomatik ravishda rus tilida yozilgan matnni ingliz tiliga"}</Just>
      <Just className="ml-[118px]">tarjima qiladi va tarjima qilingan matn ekranning quyi qismida ko‘rsatiladi. (5-rasmga qarang). Shuni</Just>
      <Just className="ml-[118px]">aytish kerakki, kompyuter hozircha 100% to‘la va aniq tarjima qila olmaydi, albatta. Lekin tarjima</Just>
      <Line className="ml-[118px]"><Fit className="w-[659px]">sifati oshib boruvchi dasturlar yaratilish jarayoni davom etmoqda.</Fit></Line>
      <div className="mt-[28px]"><Stylus /></div>
      <Line className="mt-px ml-[177px]"><Fit className="w-[334px]">5-rasm. Tarjima natijasi darchasi.</Fit></Line>
    </main>
  );
}
